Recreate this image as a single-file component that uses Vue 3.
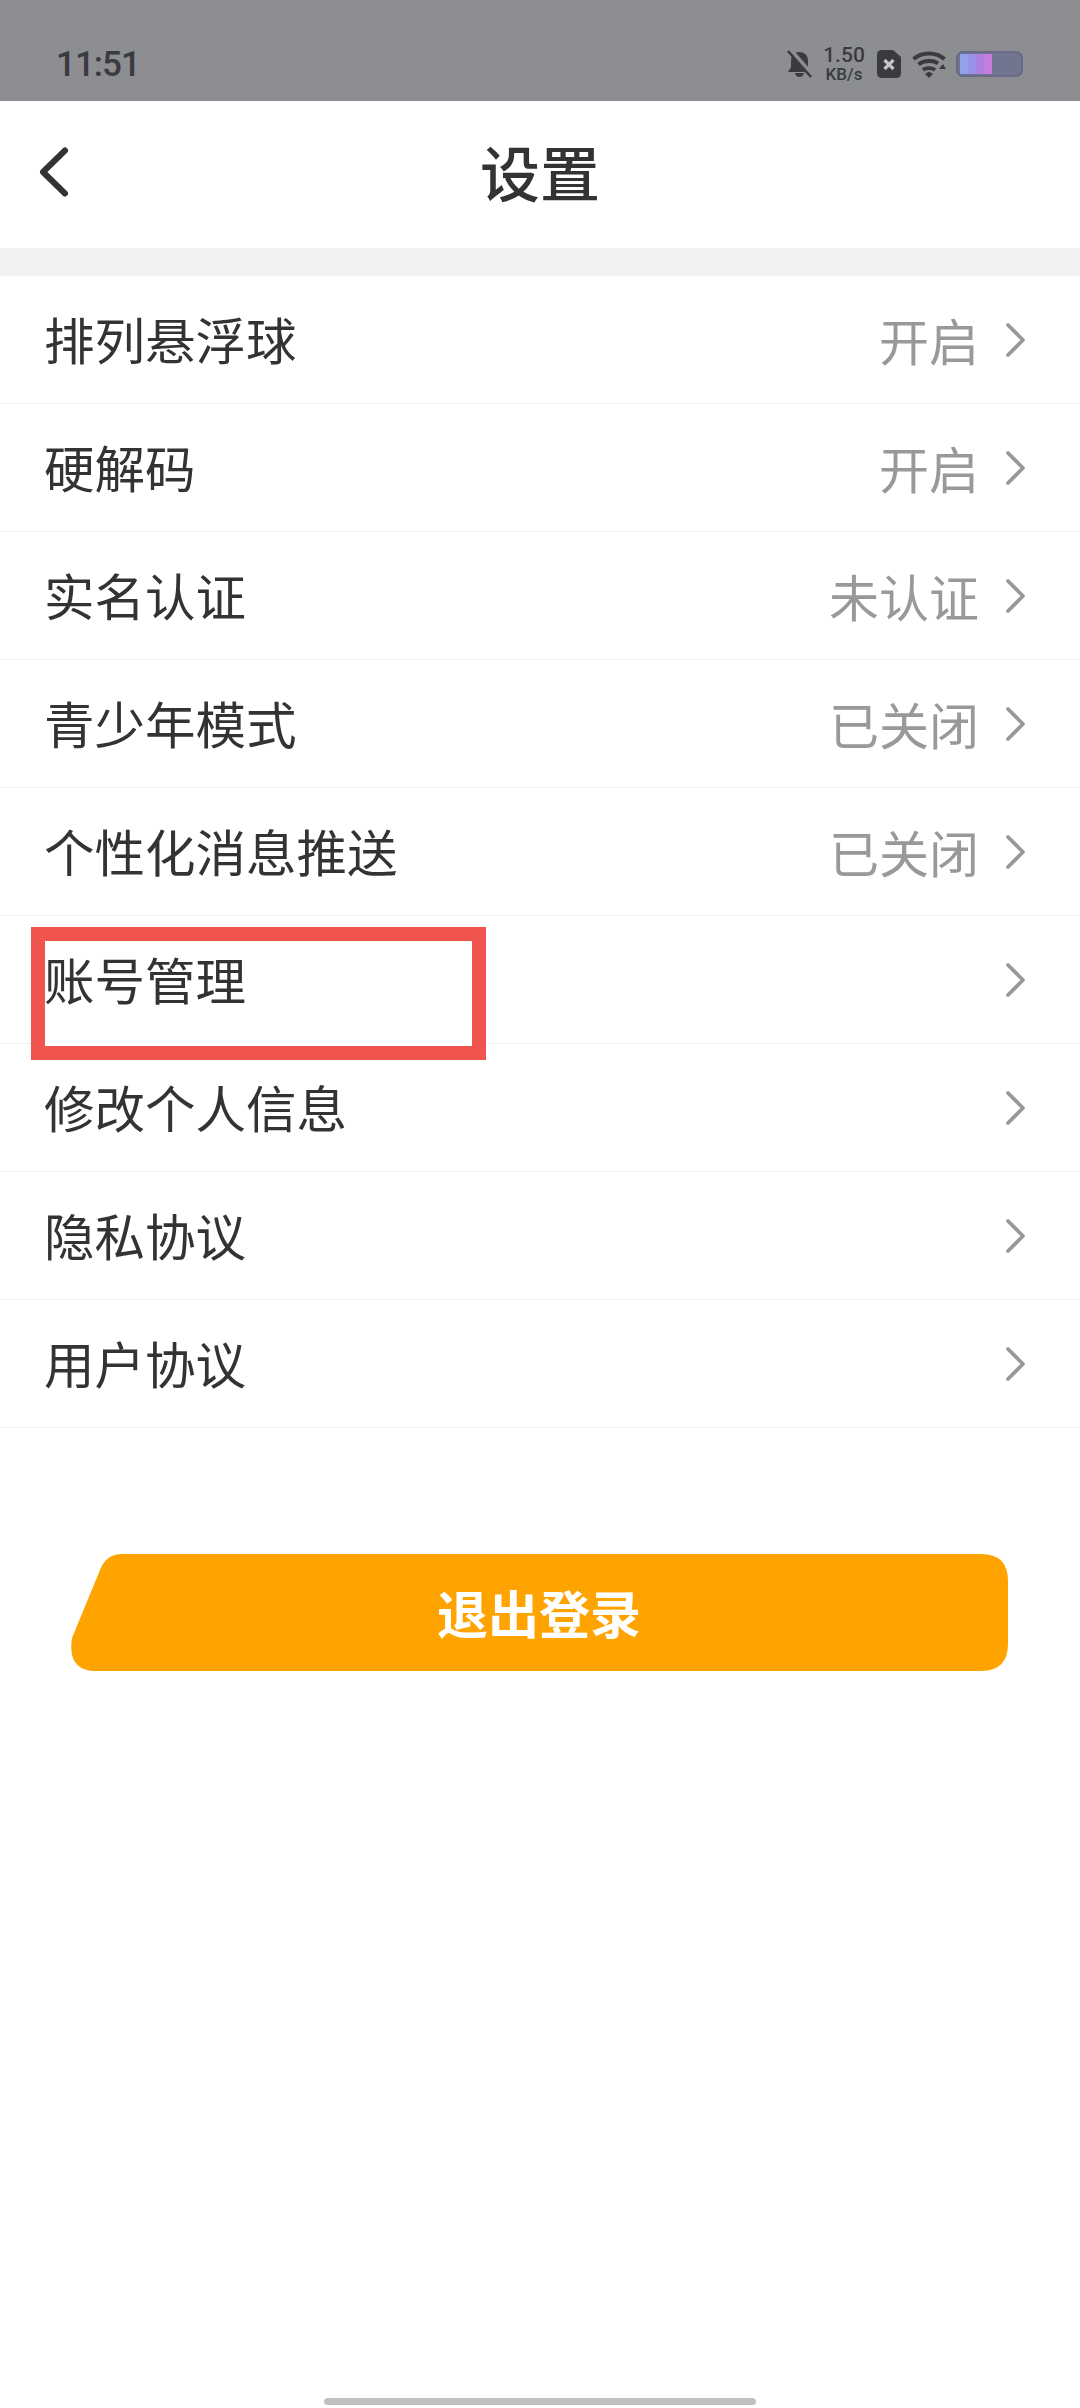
<template>
  <div class="page">
    <div class="status">
      <span class="time">11:51</span>
      <div class="status-icons">
        <svg class="ic-bell" width="25" height="28" viewBox="0 0 25 28">
          <path d="M4 11 C4 5 8 2 12.500 2 C17 2 21 5 21 11 L21 17 L24 22 L1 22 L4 17 Z" fill="#3a3b3e"/>
          <path d="M8 23 C8.500 26 10.500 27 12.500 27 C14.500 27 16.500 26 17 23 Z" fill="#3a3b3e"/>
          <path d="M3 0 L25 25" stroke="#8d8e92" stroke-width="5"/>
          <path d="M1 1 L24 27" stroke="#3a3b3e" stroke-width="2.600"/>
        </svg>
        <div class="speed">
          <span class="speed-num">1.50</span>
          <span class="speed-unit">KB/s</span>
        </div>
        <svg class="ic-sim" width="24" height="28" viewBox="0 0 24 28">
          <path d="M5 0 H16 L24 7 V23 Q24 28 19 28 H5 Q0 28 0 23 V5 Q0 0 5 0 Z" fill="#3a3b3e"/>
          <path d="M7.500 10 L16.500 19 M16.500 10 L7.500 19" stroke="#c4c4c6" stroke-width="3.200"/>
        </svg>
        <svg class="ic-wifi" width="34" height="28" viewBox="0 0 34 28">
          <path d="M1.500 9 C10 1.500 24 1.500 32.500 9" fill="none" stroke="#3a3b3e" stroke-width="4"/>
          <path d="M6.500 14.500 C12 10 22 10 26 13.500" fill="none" stroke="#3a3b3e" stroke-width="4"/>
          <path d="M11 20 C14 17.500 20 17.500 23 20" fill="none" stroke="#3a3b3e" stroke-width="3.600"/>
          <path d="M13 24 L17 21.500 L21 24 L17 28 Z" fill="#3a3b3e"/>
          <path d="M27 19 L31 14 L34 19 Z" fill="#3a3b3e"/>
        </svg>
        <div class="battery">
          <span v-for="c in batteryBars" :key="c" class="battery-bar" :style="{ background: c }"></span>
        </div>
      </div>
    </div>

    <div class="header">
      <svg class="back" width="32" height="50" viewBox="0 0 32 50">
        <path d="M27 3.500 L5 25 L27 46.500" fill="none" stroke="#333" stroke-width="6" stroke-linecap="round" stroke-linejoin="round"/>
      </svg>
      <span class="title">设置</span>
    </div>

    <div class="gap"></div>

    <div class="list">
      <div v-for="item in items" :key="item.label" class="row">
        <div v-if="item.marked" class="mark"></div>
        <span class="label">{{ item.label }}</span>
        <span v-if="item.value" class="value">{{ item.value }}</span>
        <svg class="arrow" width="22" height="36" viewBox="0 0 22 36">
          <path d="M3 3 L18 18 L3 33" fill="none" stroke="#999" stroke-width="3.800" stroke-linecap="round" stroke-linejoin="round"/>
        </svg>
      </div>
    </div>

    <button class="logout">退出登录</button>

    <div class="home-bar"></div>
  </div>
</template>

<script setup>
const batteryBars = ['#8fa2ea', '#9a92e8', '#ad7fe2', '#c67edc']

const items = [
  { label: '排列悬浮球', value: '开启' },
  { label: '硬解码', value: '开启' },
  { label: '实名认证', value: '未认证' },
  { label: '青少年模式', value: '已关闭' },
  { label: '个性化消息推送', value: '已关闭' },
  { label: '账号管理', marked: true },
  { label: '修改个人信息' },
  { label: '隐私协议' },
  { label: '用户协议' },
]
</script>

<style>
html, body { background: #fff; }
</style>

<style scoped>
.page {
  width: 1080px; height: 2408px; display: flex; flex-direction: column;
  background: #fff; color: #333; overflow: hidden;
  font-family: "Noto Sans CJK SC", "Noto Sans", sans-serif;
}

.status {
  height: 101px; flex: none; background: #8d8e92; color: #3a3b3e;
  display: flex; align-items: center; justify-content: space-between;
  padding: 27px 57px 0 56px; box-sizing: border-box;
}
.time { font: 500 35px/1 Roboto, sans-serif; letter-spacing: -1px; }
.status-icons { display: flex; align-items: center; }
.ic-bell { margin-right: 10px; }
.speed {
  display: flex; flex-direction: column; align-items: center; width: 44px; margin-right: 11px;
  font-family: Roboto, sans-serif; font-weight: 500;
}
.speed-num { font-size: 21px; line-height: 21px; }
.speed-unit { font-size: 17px; line-height: 17px; }
.ic-sim { margin-right: 11px; }
.ic-wifi { margin-right: 10px; }
.battery {
  width: 67px; height: 26px; box-sizing: border-box; padding: 1px 2px;
  border: 2px solid #686b87; border-radius: 7px; background: #72758f;
  display: flex;
}
.battery-bar { width: 8px; }

.header {
  height: 147px; flex: none; position: relative; display: flex;
  align-items: center; justify-content: center;
  box-sizing: border-box; padding-bottom: 8px;
}
.back { position: absolute; left: 38px; top: 46px; }
.title { font-size: 60px; font-weight: 500; line-height: 1; color: #333; }

.gap { height: 28px; flex: none; background: #f2f2f2; }

.row {
  height: 128px; box-sizing: border-box; border-bottom: 1px solid #f0f0f0;
  position: relative; display: flex; align-items: center;
  padding: 0 53px 2px 44px;
}
.label { font-size: 50.500px; line-height: 1; color: #333; position: relative; flex: 1; }
.value { font-size: 50px; line-height: 1; color: #999; margin-right: 26px; }
.arrow { flex: none; margin-top: 2px; }

.mark {
  position: absolute; left: 31px; top: 11px; width: 455px; height: 133px;
  box-sizing: border-box; border: 14px solid #f0544f; background: #fff;
}

.logout {
  width: 938px; height: 117px; flex: none; margin: 126px 0 0 70px; padding: 0;
  border: 0; background: #ffa300; color: #fff;
  font: 700 51px/1 "Noto Sans CJK SC", sans-serif;
  clip-path: path("M52 0 H911 Q938 0 938 27 V90 Q938 117 911 117 H26 Q-3 117 2 84 L30 16 Q36 0 52 0 Z");
}

.home-bar {
  width: 432px; height: 7px; flex: none; margin: auto 0 3px 324px;
  background: #c0c0c0; border-radius: 4px;
}
</style>
